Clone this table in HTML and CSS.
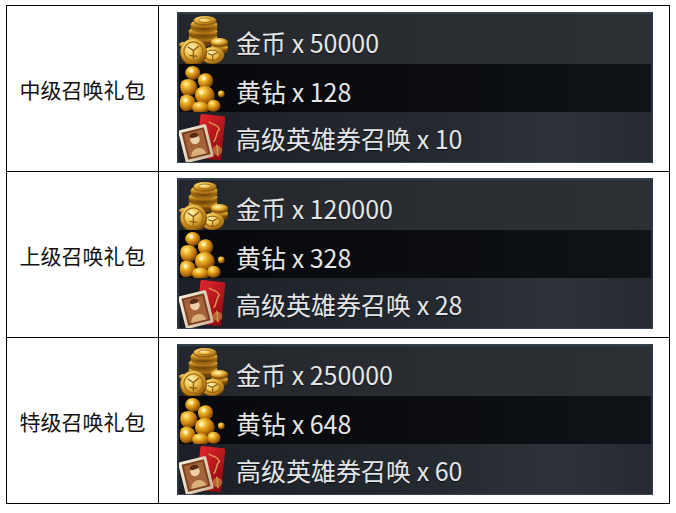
FILE: index.html
```html
<!DOCTYPE html>
<html lang="zh">
<head>
<meta charset="utf-8">
<link rel="stylesheet" href="styles.css">
</head>
<body>
<svg class="defs" width="0" height="0" aria-hidden="true">
  <defs>
    <linearGradient id="gold" x1="0" y1="0" x2="0" y2="1">
      <stop offset="0" stop-color="#fff3a8"/>
      <stop offset="0.35" stop-color="#e9b63a"/>
      <stop offset="0.75" stop-color="#a4680f"/>
      <stop offset="1" stop-color="#5a3606"/>
    </linearGradient>
    <radialGradient id="coinface" cx="0.4" cy="0.35" r="0.7">
      <stop offset="0" stop-color="#fff6c0"/>
      <stop offset="0.4" stop-color="#f0c451"/>
      <stop offset="0.8" stop-color="#b77a16"/>
      <stop offset="1" stop-color="#6b4208"/>
    </radialGradient>
    <radialGradient id="nug" cx="0.35" cy="0.3" r="0.8">
      <stop offset="0" stop-color="#fff2a0"/>
      <stop offset="0.25" stop-color="#f2bf36"/>
      <stop offset="0.6" stop-color="#c67a0c"/>
      <stop offset="1" stop-color="#5e3004"/>
    </radialGradient>
    <linearGradient id="redenv" x1="0" y1="0" x2="1" y2="1">
      <stop offset="0" stop-color="#e4242c"/>
      <stop offset="1" stop-color="#8c0a10"/>
    </linearGradient>
    <linearGradient id="card" x1="0" y1="0" x2="1" y2="1">
      <stop offset="0" stop-color="#fbf1df"/>
      <stop offset="1" stop-color="#cdb89a"/>
    </linearGradient>
    <symbol id="coins" viewBox="0 0 50 50">
      <ellipse cx="24" cy="26" rx="15" ry="5.5" fill="#6a4208"/>
      <ellipse cx="24" cy="23" rx="15" ry="5.5" fill="url(#gold)"/>
      <ellipse cx="24" cy="19" rx="15" ry="5.5" fill="#8a5a0c"/>
      <ellipse cx="24" cy="16" rx="15" ry="5.5" fill="url(#gold)"/>
      <ellipse cx="25" cy="12" rx="14" ry="5.5" fill="#9a6510"/>
      <ellipse cx="25" cy="9" rx="14" ry="5.5" fill="url(#gold)"/>
      <ellipse cx="26" cy="6" rx="12" ry="4.5" fill="#a06a12"/>
      <ellipse cx="26" cy="4.5" rx="12" ry="4.5" fill="url(#coinface)"/>
      <ellipse cx="26" cy="4.5" rx="7" ry="2.4" fill="none" stroke="#a86c12" stroke-width="1"/>
      <ellipse cx="41" cy="36" rx="9" ry="4" fill="#6a4208"/>
      <ellipse cx="41" cy="33" rx="9" ry="4" fill="url(#gold)"/>
      <ellipse cx="41" cy="29" rx="9" ry="4" fill="#8a5a0c"/>
      <ellipse cx="41" cy="27" rx="9" ry="4" fill="url(#coinface)"/>
      <ellipse cx="5" cy="30" rx="6" ry="3" fill="url(#gold)"/>
      <ellipse cx="34" cy="41" rx="12" ry="9" fill="url(#coinface)"/>
      <ellipse cx="34" cy="41" rx="8" ry="5.5" fill="none" stroke="#9a6510" stroke-width="1.2"/>
      <path d="M29 39 L34 41 L39 38 M34 41 L34 46" stroke="#8b5a0c" stroke-width="1.2" fill="none"/>
      <circle cx="14" cy="38" r="14" fill="#7a4c08"/>
      <circle cx="14" cy="37" r="13.5" fill="url(#coinface)"/>
      <circle cx="14" cy="37" r="10" fill="none" stroke="#a06810" stroke-width="1.2"/>
      <path d="M8 32 L14 36 L20 31 M10 41 L18 42 M14 36 L14 45" stroke="#8b5a0c" stroke-width="1.4" fill="none"/>
    </symbol>
    <symbol id="nuggets" viewBox="0 0 50 50">
      <path d="M9 2 C15 -1 22 3 21 10 C20 16 12 17 8 13 C4 9 5 5 9 2Z" fill="url(#nug)"/>
      <path d="M22 10 C29 6 36 11 34 19 C32 26 23 26 20 21 C18 17 18 13 22 10Z" fill="url(#nug)"/>
      <path d="M2 17 C8 12 18 15 18 24 C18 31 9 34 4 31 C0 28 -1 21 2 17Z" fill="url(#nug)"/>
      <path d="M18 25 C24 19 35 22 36 31 C37 38 29 42 22 40 C15 38 14 30 18 25Z" fill="url(#nug)"/>
      <path d="M1 33 C6 29 15 31 16 38 C17 45 10 49 4 48 C-1 46 -1 38 1 33Z" fill="url(#nug)"/>
      <path d="M14 40 C20 36 30 38 31 45 C31 50 20 51 15 49 C12 47 12 43 14 40Z" fill="url(#nug)"/>
      <path d="M30 38 C35 34 43 37 42 44 C41 49 32 50 30 47 C28 44 28 41 30 38Z" fill="url(#nug)"/>
      <circle cx="43" cy="30" r="3.5" fill="url(#nug)"/>
      <circle cx="12" cy="6" r="2" fill="#fff8d0" opacity="0.8"/>
      <circle cx="25" cy="14" r="2" fill="#fff8d0" opacity="0.7"/>
      <circle cx="22" cy="29" r="2.2" fill="#fff8d0" opacity="0.7"/>
      <circle cx="6" cy="37" r="2" fill="#fff8d0" opacity="0.7"/>
    </symbol>
    <symbol id="ticket" viewBox="0 0 50 50">
      <rect x="19" y="1" width="26" height="46" rx="2" fill="url(#redenv)" transform="rotate(6 32 24)"/>
      <path d="M30 8 C34 12 39 10 41 16 C37 19 39 25 35 29 M38 32 C41 36 37 40 40 44" stroke="#e0b060" stroke-width="1.5" fill="none" opacity="0.85"/>
      <g transform="rotate(-14 18 32)">
        <rect x="2" y="13" width="30" height="35" rx="2" fill="url(#card)"/>
        <rect x="5" y="16" width="24" height="29" fill="#7a3e22"/>
        <rect x="7" y="18" width="20" height="25" fill="#a5633a"/>
        <circle cx="17" cy="26" r="5" fill="#ecd0aa"/>
        <path d="M9 43 C10 33 24 33 25 43Z" fill="#d9b07a"/>
        <path d="M12 22 C14 18 20 18 22 22 L20 24 L14 24Z" fill="#5a2a14"/>
      </g>
      <circle cx="39" cy="38" r="5" fill="#d2a24c" opacity="0.55"/>
    </symbol>
  </defs>
</svg>

<table class="gifts">
  <tr>
    <td class="name">中级召唤礼包</td>
    <td class="cell">
      <div class="panel">
        <div class="item item-a"><svg class="icon"><use href="#coins"/></svg><span class="label"><span class="nm">金币</span> <span class="qty">x 50000</span></span></div>
        <div class="item item-b"><svg class="icon"><use href="#nuggets"/></svg><span class="label"><span class="nm">黄钻</span> <span class="qty">x 128</span></span></div>
        <div class="item item-c"><svg class="icon"><use href="#ticket"/></svg><span class="label"><span class="nm">高级英雄券召唤</span> <span class="qty">x 10</span></span></div>
      </div>
    </td>
  </tr>
  <tr>
    <td class="name">上级召唤礼包</td>
    <td class="cell">
      <div class="panel">
        <div class="item item-a"><svg class="icon"><use href="#coins"/></svg><span class="label"><span class="nm">金币</span> <span class="qty">x 120000</span></span></div>
        <div class="item item-b"><svg class="icon"><use href="#nuggets"/></svg><span class="label"><span class="nm">黄钻</span> <span class="qty">x 328</span></span></div>
        <div class="item item-c"><svg class="icon"><use href="#ticket"/></svg><span class="label"><span class="nm">高级英雄券召唤</span> <span class="qty">x 28</span></span></div>
      </div>
    </td>
  </tr>
  <tr>
    <td class="name">特级召唤礼包</td>
    <td class="cell">
      <div class="panel">
        <div class="item item-a"><svg class="icon"><use href="#coins"/></svg><span class="label"><span class="nm">金币</span> <span class="qty">x 250000</span></span></div>
        <div class="item item-b"><svg class="icon"><use href="#nuggets"/></svg><span class="label"><span class="nm">黄钻</span> <span class="qty">x 648</span></span></div>
        <div class="item item-c"><svg class="icon"><use href="#ticket"/></svg><span class="label"><span class="nm">高级英雄券召唤</span> <span class="qty">x 60</span></span></div>
      </div>
    </td>
  </tr>
</table>
</body>
</html>
```

FILE: styles.css
```css
html, body {
  margin: 0;
  padding: 0;
  background: #ffffff;
}

.defs {
  position: absolute;
  width: 0;
  height: 0;
}

.gifts {
  margin: 5px 0 0 6px;
  border-collapse: collapse;
  width: 664px;
  table-layout: fixed;
}

.gifts td {
  border: 1px solid #000;
  padding: 0;
}

.name {
  width: 151px;
  text-align: center;
  vertical-align: middle;
  font-family: "Noto Sans CJK SC", sans-serif;
  font-size: 21px;
  color: #111;
}

.cell {
  padding: 6px 0 8px 18px !important;
  vertical-align: top;
}

.panel {
  width: 476px;
  height: 151px;
  box-sizing: border-box;
  border: 2px solid #2a3442;
  border-top-color: #33404f;
  border-bottom-color: #3a4656;
  background: #1a1d22;
  display: flex;
  flex-direction: column;
}

.item {
  display: flex;
  align-items: center;
  gap: 7px;
  box-sizing: border-box;
}

.item-a {
  height: 50px;
  background: linear-gradient(90deg, #24272c 0%, #2a2d32 60%, #2c2f34 100%);
  padding-top: 6px;
}

.item-b {
  height: 48px;
  background: linear-gradient(90deg, #07090c 0%, #0b0d11 60%, #101318 100%);
  padding-top: 6px;
}

.item-c {
  flex: 1;
  background: linear-gradient(90deg, #1c2026 0%, #252a31 55%, #2e333a 80%, #262a31 100%);
  padding-top: 2px;
}

.icon {
  width: 50px;
  height: 48px;
  flex: none;
  margin-top: -4px;
}

.item-c .icon {
  margin-top: 0;
}

.label {
  font-family: "Noto Sans CJK SC", sans-serif;
  font-size: 25px;
  line-height: 30px;
  color: #e4e6e8;
  white-space: nowrap;
  text-shadow: 0 1px 1px rgba(0, 0, 0, 0.6);
}
```
